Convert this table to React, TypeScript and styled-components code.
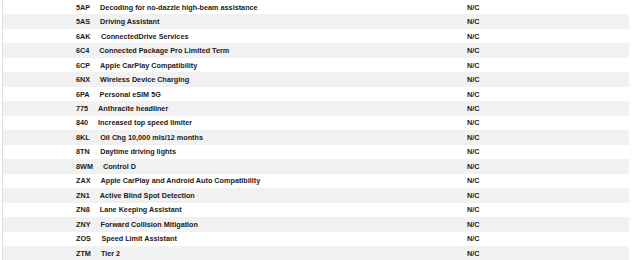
import React from "react";
import styled, { createGlobalStyle } from "styled-components";

const Global = createGlobalStyle`
  html, body { margin: 0; padding: 0; background: #ffffff; }
  body { font-family: "Liberation Sans", Arial, sans-serif; }
`;

const Table = styled.div`
  margin-left: 2px;
  width: 626px;
  border-left: 1px solid #dedede;
  display: flex;
  flex-direction: column;
`;

const Row = styled.div<{ $striped: boolean }>`
  height: 14.47px;
  display: grid;
  grid-template-columns: 391px 1fr;
  align-items: center;
  padding-left: 73px;
  background: ${(p) => (p.$striped ? "#f1f1f1" : "#ffffff")};
  font-size: 7.25px;
  font-weight: 700;
  color: #1a1a1a;
  white-space: nowrap;
`;

const OptionCell = styled.div`
  display: flex;
  align-items: center;
`;

const Code = styled.span``;

const Desc = styled.span<{ $gap: number }>`
  margin-left: ${(p) => p.$gap}px;
`;

const Price = styled.div``;

const rows: [string, string, number][] = [
  ["5AP", "Decoding for no-dazzle high-beam assistance", 10],
  ["5AS", "Driving Assistant", 10],
  ["6AK", "ConnectedDrive Services", 10.5],
  ["6C4", "Connected Package Pro Limited Term", 10],
  ["6CP", "Apple CarPlay Compatibility", 10],
  ["6NX", "Wireless Device Charging", 10],
  ["6PA", "Personal eSIM 5G", 10],
  ["775", "Anthracite headliner", 10],
  ["840", "Increased top speed limiter", 10],
  ["8KL", "Oil Chg 10,000 mls/12 months", 10.5],
  ["8TN", "Daytime driving lights", 10.5],
  ["8WM", "Control D", 10],
  ["ZAX", "Apple CarPlay and Android Auto Compatibility", 10],
  ["ZN1", "Active Blind Spot Detection", 10],
  ["ZN8", "Lane Keeping Assistant", 10],
  ["ZNY", "Forward Collision Mitigation", 10],
  ["ZOS", "Speed Limit Assistant", 10.5],
  ["ZTM", "Tier 2", 10],
];

export default function App() {
  return (
    <>
      <Global />
      <Table>
        {rows.map(([code, desc, gap], i) => (
          <Row key={code} $striped={i % 2 === 1}>
            <OptionCell>
              <Code>{code}</Code>
              <Desc $gap={gap}>{desc}</Desc>
            </OptionCell>
            <Price>N/C</Price>
          </Row>
        ))}
      </Table>
    </>
  );
}
